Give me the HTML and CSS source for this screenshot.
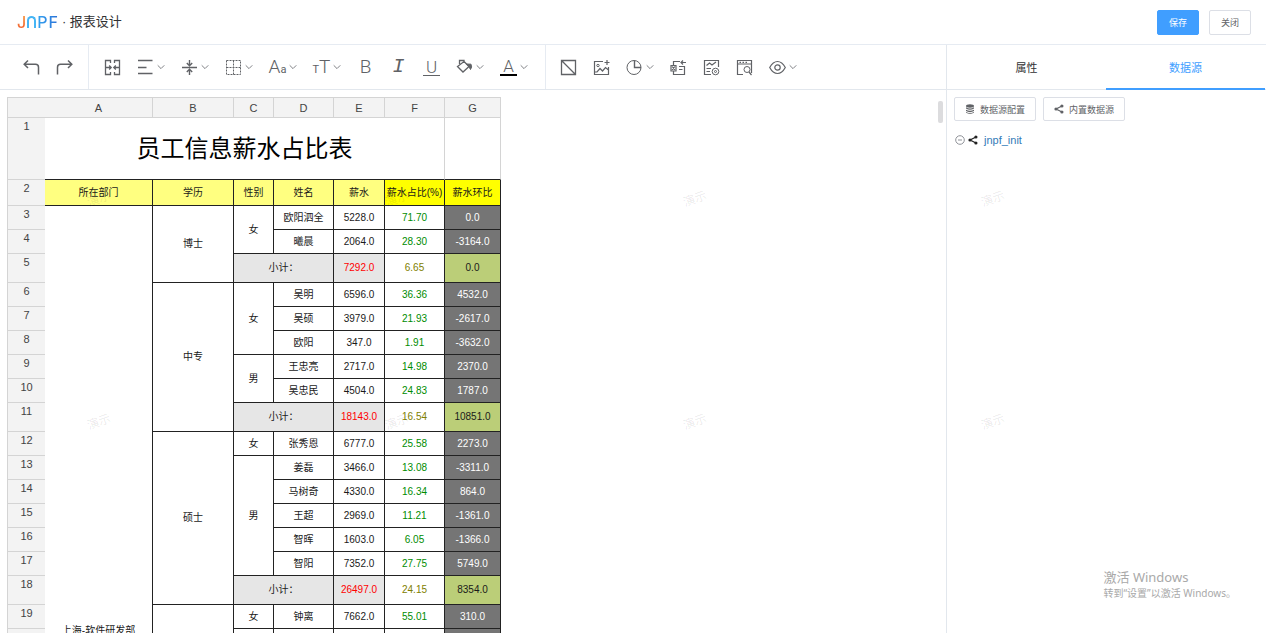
FILE: index.html
```html
<!DOCTYPE html>
<html lang="zh-CN">
<head>
<meta charset="utf-8">
<title>JNPF · 报表设计</title>
<link rel="stylesheet" href="styles.css">
</head>
<body>
<svg class="defs" aria-hidden="true">
  <symbol id="chev" viewBox="0 0 8 8"><path d="M.7 2.3 4 5.6 7.3 2.3"/></symbol>
  <symbol id="share" viewBox="0 0 10 10"><path d="M8 2 2 5l6 3" fill="none" stroke="currentColor" stroke-width="1.2"/><g fill="currentColor"><circle cx="7.9" cy="2" r="1.6"/><circle cx="2" cy="5" r="1.6"/><circle cx="7.9" cy="8" r="1.6"/></g></symbol>
</svg>
<header class="topbar">
  <h1 class="brand"><span class="logo" aria-label="JNPF"><span class="logo-j">J</span><span class="logo-arch"></span><span class="logo-p">P</span><span class="logo-f">F</span></span><span>· 报表设计</span></h1>
  <div class="actions">
    <button class="btn primary">保存</button>
    <button class="btn">关闭</button>
  </div>
</header>
<div class="body">
  <main class="main">
    <div class="toolbar">
      <div class="group first">
        <button class="tool" aria-label="撤销"><svg class="ico" viewBox="0 0 17 17"><path d="M5 1.5 1.2 5.2 5 9M1.5 5.2H12.500Q15.500 5.200 15.500 8.200V15.500" stroke-width="1.5"/></svg></button>
        <button class="tool" aria-label="重做"><svg class="ico" viewBox="0 0 17 17"><path d="M12 1.500 15.800 5.200 12 9M15.500 5.200H4.500Q1.500 5.200 1.500 8.200V15.500" stroke-width="1.5"/></svg></button>
      </div>
      <div class="group second">
        <button class="tool" aria-label="合并单元格"><svg class="ico" viewBox="0 0 17 17"><path d="M6.500 4V1.500H1.500V15.500H6.500V13M10.500 4V1.500H15.500V15.500H10.500V13M1.500 8.500H7M15.500 8.500H10M5.200 6.500 7.200 8.500 5.200 10.500M11.800 6.500 9.800 8.500 11.800 10.500" stroke-width="1.300"/></svg></button>
        <button class="tool" aria-label="水平对齐"><svg class="ico" viewBox="0 0 17 17"><path d="M1 1.500H15.500M1 8.500H9.500M1 14.500H15.500" stroke-width="1.400"/></svg><svg class="chev"><use href="#chev"/></svg></button>
        <button class="tool" aria-label="垂直对齐"><svg class="ico" viewBox="0 0 17 17"><path d="M1 8.500H16M8.500 1V6.500M8.500 16V10.500M5.800 4 8.500 6.700 11.200 4M5.800 13 8.500 10.300 11.200 13" stroke-width="1.400"/></svg><svg class="chev"><use href="#chev"/></svg></button>
        <button class="tool" aria-label="边框"><svg class="ico" viewBox="0 0 17 17"><path d="M1.500 1.500H15.500V15.500H1.500ZM8.500 1.500V15.500M1.500 8.500H15.500" stroke-dasharray="2 1"/></svg><svg class="chev"><use href="#chev"/></svg></button>
        <button class="tool" aria-label="字体"><span class="ico glyph"><span class="g18">A</span><span class="g11">a</span></span><svg class="chev"><use href="#chev"/></svg></button>
        <button class="tool" aria-label="字号"><span class="ico glyph"><span class="g11">T</span><span class="g18">T</span></span><svg class="chev"><use href="#chev"/></svg></button>
        <button class="tool" aria-label="加粗"><span class="ico glyph g18">B</span></button>
        <button class="tool" aria-label="斜体"><span class="ico glyph slant">I</span></button>
        <button class="tool" aria-label="下划线"><span class="ico glyph g16 under">U</span></button>
        <button class="tool" aria-label="填充颜色"><svg class="ico" viewBox="0 0 17 17"><path d="M3.500 5V1.500H8V4M8 2.500 13 7.500 7 13 1.500 7.500Z" stroke-width="1.300"/><path d="M10.500 5 15 5.200Q16.500 8 14.500 10.500L12.800 7.500Z" fill="currentColor"/></svg><svg class="chev"><use href="#chev"/></svg></button>
        <button class="tool" aria-label="文字颜色"><span class="ico glyph g16 ink">A</span><svg class="chev"><use href="#chev"/></svg></button>
      </div>
      <div class="group third">
        <button class="tool" aria-label="斜线表头"><svg class="ico" viewBox="0 0 17 17"><path d="M1.500 1.500H15.500V15.500H1.500ZM1.500 1.500 15.500 15.500" stroke-width="1.300"/></svg></button>
        <button class="tool" aria-label="图片"><svg class="ico" viewBox="0 0 17 17"><path d="M10 2.500H1.500V15.500H15.500V8M1.500 13H4L7 9.500 9.500 12 12.500 8.500 15.500 11M11.500 3.500H16.500M14 1V6" stroke-width="1.200"/><circle cx="5" cy="6.500" r="1.200"/></svg></button>
        <button class="tool" aria-label="图表"><svg class="ico" viewBox="0 0 17 17"><circle cx="8" cy="8.500" r="7"/><path d="M8.500 1.500V8.500H15" stroke-width="1.400"/></svg><svg class="chev"><use href="#chev"/></svg></button>
        <button class="tool" aria-label="导入"><svg class="ico" viewBox="0 0 17 17"><path d="M3.500 6V2.500H10M3.500 12.500V15.500H14.500V12M1 6.500H6V12H1ZM2.200 7.500 4.800 11M4.800 7.500 2.200 11M9 7.500H14.500V12M9 10.500H12.500M11 3.500H16M13 1.500 11 3.500 13 5.500" stroke-width="1.200"/></svg></button>
        <button class="tool" aria-label="报表设置"><svg class="ico" viewBox="0 0 17 17"><path d="M8 15.500H1.500V1.500H15.500V8M3.500 6.500 6.500 4 9 6 13 3M3.500 9.500H8M3.500 12.500H7" stroke-width="1.200"/><circle cx="12.500" cy="12.500" r="3.300"/><circle cx="12.500" cy="12.500" r="1"/></svg></button>
        <button class="tool" aria-label="查询设置"><svg class="ico" viewBox="0 0 17 17"><path d="M7 15.500H1.500V1.500H15.500V14M1.500 5H15.500M3.500 3.300H5M6.500 3.300H8M9.500 3.300H11M13 13 15.500 16" stroke-width="1.200"/><circle cx="11" cy="10.500" r="3"/></svg></button>
        <button class="tool" aria-label="预览"><svg class="ico" viewBox="0 0 17 17"><path d="M.7 8.500Q4 2.500 8.500 2.500T16.300 8.500Q13 14.500 8.500 14.500T.7 8.500Z" stroke-width="1.200"/><circle cx="8.500" cy="8.500" r="2.700" stroke-width="1.200"/></svg><svg class="chev"><use href="#chev"/></svg></button>
      </div>
    </div>
    <div class="sheet">
      <table class="grid">
        <colgroup><col class="w-n"><col class="w-a"><col class="w-b"><col class="w-c"><col class="w-d"><col class="w-e"><col class="w-f"><col class="w-g"></colgroup>
        <thead><tr><th class="corner"></th><th>A</th><th>B</th><th>C</th><th>D</th><th>E</th><th>F</th><th>G</th></tr></thead>
        <tbody>
        <tr class="r-title"><th>1</th><td colspan="6" class="title">员工信息薪水占比表</td><td class="blank"></td></tr>
        <tr class="r-head"><th>2</th><td>所在部门</td><td>学历</td><td>性别</td><td>姓名</td><td>薪水</td><td class="hot">薪水占比(%)</td><td class="hot">薪水环比</td></tr>
        <tr><th>3</th><td rowspan="18" class="dept">上海-软件研发部</td><td rowspan="3">博士</td><td rowspan="2">女</td><td>欧阳泗全</td><td>5228.0</td><td class="pct">71.70</td><td class="diff">0.0</td></tr>
        <tr><th>4</th><td>曦晨</td><td>2064.0</td><td class="pct">28.30</td><td class="diff">-3164.0</td></tr>
        <tr class="sum"><th>5</th><td colspan="2" class="label">小计：</td><td class="total">7292.0</td><td class="share">6.65</td><td class="delta">0.0</td></tr>
        <tr><th>6</th><td rowspan="6">中专</td><td rowspan="3">女</td><td>吴明</td><td>6596.0</td><td class="pct">36.36</td><td class="diff">4532.0</td></tr>
        <tr><th>7</th><td>吴硕</td><td>3979.0</td><td class="pct">21.93</td><td class="diff">-2617.0</td></tr>
        <tr><th>8</th><td>欧阳</td><td>347.0</td><td class="pct">1.91</td><td class="diff">-3632.0</td></tr>
        <tr><th>9</th><td rowspan="2">男</td><td>王忠亮</td><td>2717.0</td><td class="pct">14.98</td><td class="diff">2370.0</td></tr>
        <tr><th>10</th><td>吴忠民</td><td>4504.0</td><td class="pct">24.83</td><td class="diff">1787.0</td></tr>
        <tr class="sum"><th>11</th><td colspan="2" class="label">小计：</td><td class="total">18143.0</td><td class="share">16.54</td><td class="delta">10851.0</td></tr>
        <tr><th>12</th><td rowspan="7">硕士</td><td>女</td><td>张秀恩</td><td>6777.0</td><td class="pct">25.58</td><td class="diff">2273.0</td></tr>
        <tr><th>13</th><td rowspan="5">男</td><td>姜磊</td><td>3466.0</td><td class="pct">13.08</td><td class="diff">-3311.0</td></tr>
        <tr><th>14</th><td>马树奇</td><td>4330.0</td><td class="pct">16.34</td><td class="diff">864.0</td></tr>
        <tr><th>15</th><td>王超</td><td>2969.0</td><td class="pct">11.21</td><td class="diff">-1361.0</td></tr>
        <tr><th>16</th><td>智晖</td><td>1603.0</td><td class="pct">6.05</td><td class="diff">-1366.0</td></tr>
        <tr><th>17</th><td>智阳</td><td>7352.0</td><td class="pct">27.75</td><td class="diff">5749.0</td></tr>
        <tr class="sum"><th>18</th><td colspan="2" class="label">小计：</td><td class="total">26497.0</td><td class="share">24.15</td><td class="delta">8354.0</td></tr>
        <tr><th>19</th><td rowspan="2"></td><td>女</td><td>钟离</td><td>7662.0</td><td class="pct">55.01</td><td class="diff">310.0</td></tr>
        <tr><th>20</th><td></td><td></td><td></td><td class="pct"></td><td class="diff"></td></tr>
        </tbody>
      </table>
      <span class="thumb"></span>
    </div>
  </main>
  <aside class="panel">
    <nav class="tabs"><button class="tab">属性</button><button class="tab active">数据源</button></nav>
    <div class="sources">
      <button class="btn src"><svg class="mini" viewBox="0 0 10 10" fill="currentColor"><ellipse cx="5" cy="2" rx="4" ry="1.700"/><path d="M1 3.200Q5 5.600 9 3.200V4.600Q5 7 1 4.600ZM1 5.700Q5 8 9 5.700V7Q5 9.300 1 7ZM1 8Q5 10.300 9 8V8.800Q5 11 1 8.800Z"/></svg>数据源配置</button>
      <button class="btn src"><svg class="mini"><use href="#share"/></svg>内置数据源</button>
    </div>
    <div class="node"><svg class="mini ring" viewBox="0 0 10 10"><circle cx="5" cy="5" r="4.300"/><path d="M3 5H7"/></svg><svg class="mini dark"><use href="#share"/></svg><a href="#">jnpf_init</a></div>
  </aside>
</div>
<div class="marks" aria-hidden="true"><span>演示</span><span>演示</span><span>演示</span><span>演示</span><span>演示</span><span>演示</span><span>演示</span><span>演示</span></div>
<div class="activate"><p class="big">激活 Windows</p><p>转到“设置”以激活 Windows。</p></div>
</body>
</html>
```
FILE: styles.css
```css
* { box-sizing: border-box; }
body { margin: 0; height: 100vh; display: flex; flex-direction: column; overflow: hidden; position: relative; background: #fff; color: #303133; font-family: "Liberation Sans", "Noto Sans CJK SC", sans-serif; font-size: 10px; }
button { font-family: inherit; cursor: pointer; }
.defs { display: none; }

.topbar { height: 45px; flex: none; display: flex; align-items: center; justify-content: space-between; padding: 0 15px 0 17px; border-bottom: 1px solid #e6ebf2; }
.brand { margin: 0; display: flex; align-items: center; gap: 4px; font-size: 13px; font-weight: 400; line-height: 20px; }
.logo { display: flex; align-items: center; gap: 1px; font-family: Inter, sans-serif; font-size: 16px; font-weight: 500; }
.logo span { color: transparent; background-clip: text; }
.logo .logo-j { background-image: linear-gradient(#f9a03f, #f0562e); }
.logo .logo-arch { width: 9px; height: 12px; border: 2px solid #45b5f5; border-bottom: 0; border-radius: 5px 5px 0 0; }
.logo .logo-p { background-image: linear-gradient(90deg, #35a5f0, #2f8be6); }
.logo .logo-f { background-image: linear-gradient(90deg, #2f8be6, #2c70d4); }
.actions { display: flex; gap: 10px; }
.btn { height: 24px; padding: 0 11px; border: 1px solid #dcdfe6; border-radius: 2px; background: #fff; color: #606266; font-size: 9px; }
.actions .btn { min-width: 42px; height: 25px; }
.btn.primary { background: #409eff; border-color: #409eff; color: #fff; }

.body { flex: 1; min-height: 0; display: flex; }
.main { flex: 1; min-width: 0; display: flex; flex-direction: column; }
.toolbar { height: 45px; flex: none; display: flex; border-bottom: 1px solid #e2e7ed; }
.group { display: flex; align-items: center; border-right: 1px solid #e6ebf2; }
.first { padding: 0 7px 0 15px; }
.second { padding: 0 9px 0 7px; }
.third { padding-left: 6px; border-right: 0; }
.tool { display: flex; align-items: center; padding: 0 8px; border: 0; background: none; color: #606266; }
.ico { width: 17px; height: 17px; fill: none; stroke: currentColor; }
.chev { width: 8px; height: 8px; margin-left: 3px; fill: none; stroke: #808286; }
.glyph { height: 22px; display: flex; justify-content: center; align-items: baseline; line-height: 22px; font-family: Roboto, sans-serif; font-weight: 300; }
.g11 { font-size: 11px; font-weight: 400; }
.g16 { font-size: 17px; }
.g18 { font-size: 19px; }
.slant { font-family: "Liberation Mono", monospace; font-style: italic; font-weight: 400; font-size: 20px; }
.under { height: 17px; line-height: 16px; border-bottom: 1px solid #606266; }
.ink { height: 17px; line-height: 15px; border-bottom: 2px solid #000; }

.sheet { flex: 1; min-height: 0; overflow: hidden; display: flex; justify-content: space-between; align-items: flex-start; padding: 7px 3px 0 7px; }
.thumb { width: 5px; height: 22px; margin-top: 4px; border-radius: 2px; background: #dcdcde; }
.grid { table-layout: fixed; width: 494px; border-collapse: separate; border-spacing: 0; color: #1a1a1a; line-height: 14px; }
.w-n { width: 38px; }
.w-a { width: 108px; }
.w-b { width: 81px; }
.w-c { width: 40px; }
.w-d { width: 60px; }
.w-e { width: 51px; }
.w-f { width: 60px; }
.w-g { width: 56px; }
.grid th { padding: 0; background: #f3f3f3; color: #444; font-size: 11px; font-weight: 400; line-height: 16px; border-bottom: 1px solid #d4d4d4; }
.grid thead tr { height: 21px; }
.grid thead th { border-top: 1px solid #d4d4d4; border-right: 1px solid #d4d4d4; }
.grid thead .corner { border-left: 1px solid #d4d4d4; border-right: 0; }
.grid tbody th { vertical-align: top; border-left: 1px solid #d4d4d4; }
.grid tbody tr { height: 24px; }
.grid tbody .r-title { height: 62px; }
.grid tbody .r-head { height: 26px; }
.grid tbody .sum { height: 29px; }
.grid td { padding: 0; text-align: center; white-space: nowrap; border-right: 1px solid #222; border-bottom: 1px solid #222; }
.grid .title { font-size: 24px; line-height: 30px; color: #000; border-right-color: #d4d4d4; }
.grid .blank { border-right-color: #d4d4d4; }
.r-head td { background: #ffff80; }
.r-head .hot { background: #ff0; }
.grid .dept { vertical-align: bottom; padding-bottom: 14px; }
.pct { color: #008c00; }
.diff { background: #757575; color: #fff; }
.label, .total { background: #e6e6e6; }
.total { color: #f00; }
.grid .share { color: #808000; }
.delta { background: #bbce78; }

.panel { width: 320px; flex: none; border-left: 1px solid #e2e7ed; }
.tabs { height: 45px; display: flex; padding-right: 1px; border-bottom: 1px solid #e2e7ed; }
.tab { flex: 1; height: 45px; border: 0; border-bottom: 2px solid transparent; background: none; color: #303133; font-size: 11px; }
.tab.active { color: #409eff; border-color: #409eff; }
.sources { display: flex; gap: 7px; padding: 7px 7px 0; }
.src { display: flex; align-items: center; gap: 5px; padding: 0 10px; }
.mini { width: 10px; height: 10px; flex: none; }
.ring { fill: none; stroke: #909399; stroke-width: 1; }
.dark { color: #222; }
.node { display: flex; align-items: center; gap: 3px; padding: 11px 8px; font-size: 11px; line-height: 16px; }
.node a { margin-left: 3px; color: #337ab7; text-decoration: none; }

.marks { position: absolute; left: 0; top: 90px; display: grid; grid-template-columns: repeat(4, 298px); grid-auto-rows: 223px; padding-left: 87px; padding-top: 100px; pointer-events: none; }
.marks span { width: 24px; height: 18px; font-size: 12px; line-height: 18px; color: rgba(0, 0, 0, .09); transform: rotate(-20deg); }
.activate { position: absolute; right: 30px; bottom: 32px; color: #a9a9a9; font-family: "Noto Sans", "Noto Sans CJK SC", sans-serif; font-size: 10px; line-height: 16px; }
.activate p { margin: 0; }
.activate .big { font-size: 13px; }
```
